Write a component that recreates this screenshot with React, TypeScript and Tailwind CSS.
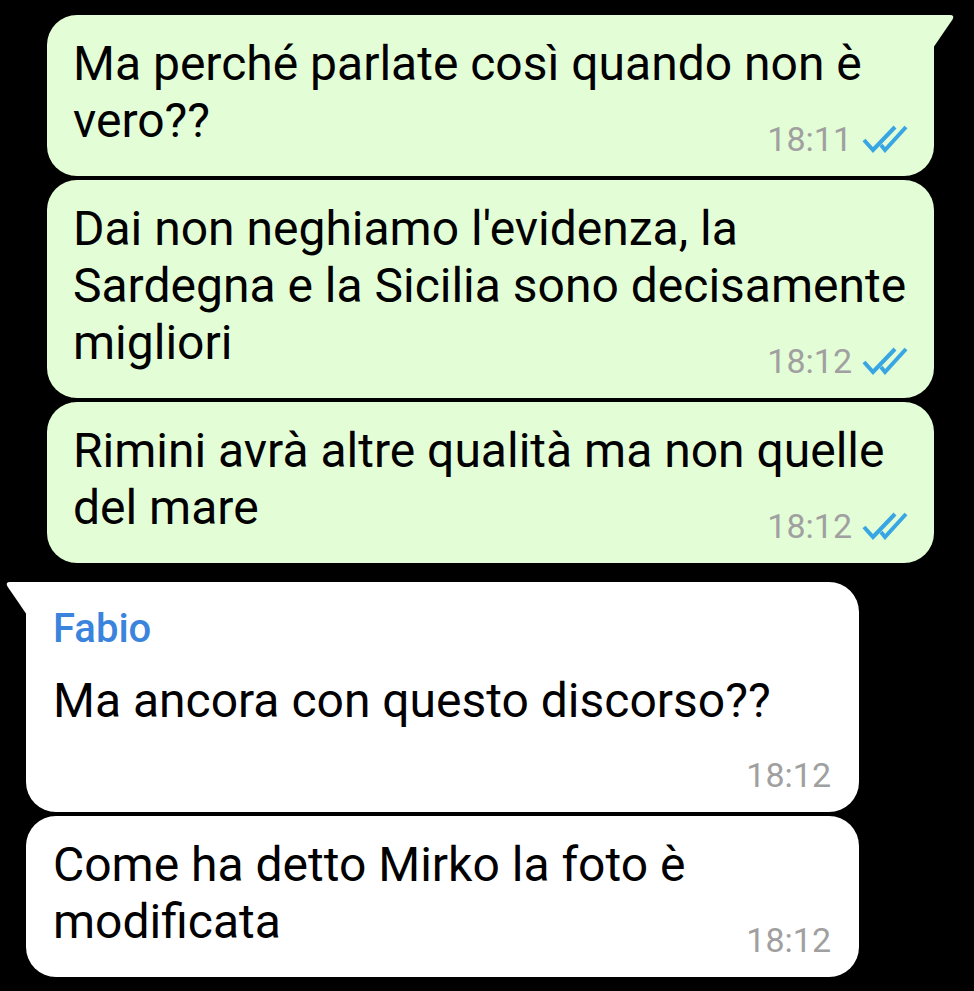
const font = { fontFamily: "Roboto, 'Noto Sans', sans-serif" };

type Msg = {
  lines: string[];
  time: string;
  out?: boolean;
  name?: string;
  tail?: boolean;
  timeBelow?: boolean;
};

const messages: Msg[] = [
  { out: true, tail: true, lines: ["Ma perché parlate così quando non è", "vero??"], time: "18:11" },
  {
    out: true,
    lines: ["Dai non neghiamo l'evidenza, la", "Sardegna e la Sicilia sono decisamente", "migliori"],
    time: "18:12",
  },
  { out: true, lines: ["Rimini avrà altre qualità ma non quelle", "del mare"], time: "18:12" },
  { tail: true, name: "Fabio", lines: ["Ma ancora con questo discorso??"], time: "18:12", timeBelow: true },
  { lines: ["Come ha detto Mirko la foto è", "modificata"], time: "18:12" },
];

function Ticks() {
  return (
    <svg width="46" height="28" viewBox="0 0 46 28" fill="none" stroke="#38a6e2" strokeWidth="4">
      <path d="M2 15 L11 25 L33 2" />
      <path d="M19 20 L23 25 L44 2" />
    </svg>
  );
}

function Bubble({ m }: { m: Msg }) {
  const bg = m.out ? "bg-[#e3fdd7]" : "bg-white";
  let corner = "rounded-[30px]";
  if (m.tail && m.out) corner = "rounded-[30px] rounded-tr-none";
  if (m.tail && !m.out) corner = "rounded-[30px] rounded-tl-none";

  return (
    <div className={`relative ${bg} ${corner} ${m.out ? "w-[887px] pl-[26px] pr-[26px]" : "w-[833px] pl-[27px] pr-[28px]"} ${m.name ? "pt-[23px]" : "pt-[20px]"} pb-[17px]`}>
      {m.tail && m.out && (
        <svg className="absolute top-0 right-[-21px]" width="22" height="34" viewBox="0 0 22 34">
          <path d="M0 0 L17 0 Q22 0 19.5 4.5 L0 33 Z" fill="#e3fdd7" />
        </svg>
      )}
      {m.tail && !m.out && (
        <svg className="absolute top-0 left-[-21px]" width="22" height="34" viewBox="0 0 22 34">
          <path d="M22 0 L5 0 Q0 0 2.5 4.5 L22 33 Z" fill="#ffffff" />
        </svg>
      )}
      {m.name && (
        <div className="text-[40px] leading-[48px] font-medium text-[#3a84dd] mb-[19px]">{m.name}</div>
      )}
      <div className="text-[48px] leading-[57px] text-black whitespace-nowrap">
        {m.lines.map((l, i) => (
          <div key={i}>{l}</div>
        ))}
      </div>
      <div
        className={`flex justify-end items-center gap-[10px] h-[40px] ${m.timeBelow ? "mt-[26px]" : "mt-[-30px]"}`}
      >
        <span className="text-[34px] leading-[40px] text-[#a0a0a0]">{m.time}</span>
        {m.out && <Ticks />}
      </div>
    </div>
  );
}

export default function App() {
  const out = messages.filter((m) => m.out);
  const inc = messages.filter((m) => !m.out);
  return (
    <div className="w-[974px] h-[991px] bg-black overflow-hidden pt-[15px]" style={font}>
      <div className="flex flex-col gap-[4px] pl-[47px]">
        {out.map((m, i) => (
          <Bubble key={i} m={m} />
        ))}
      </div>
      <div className="flex flex-col gap-[4px] pl-[26px] mt-[19px]">
        {inc.map((m, i) => (
          <Bubble key={i} m={m} />
        ))}
      </div>
    </div>
  );
}
